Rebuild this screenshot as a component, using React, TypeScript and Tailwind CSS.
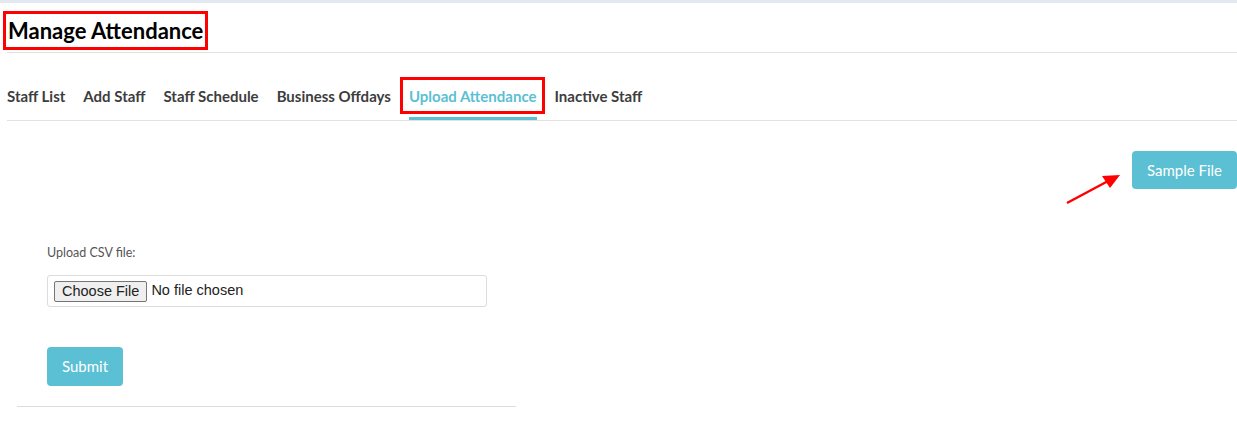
import React from "react";

// Manage Attendance — Upload Attendance tab

const TABS = [
  "Staff List",
  "Add Staff",
  "Staff Schedule",
  "Business Offdays",
  "Upload Attendance",
  "Inactive Staff",
];
const ACTIVE = "Upload Attendance";

export default function App() {
  return (
    <div className="relative min-h-[441px] w-[1237px] bg-white font-['Lato',sans-serif] text-[#333]">
      <div className="h-[3px] bg-[#e3e9f0]" />

      {/* Header */}
      <div className="ml-[7px] flex h-[50px] items-center border-b border-[#e2e2e2] pt-[5px]">
        <h1 className="-ml-[4px] border-[3px] border-[#f00] px-[2px] py-[2px] text-[22px] font-bold leading-[29px] text-black">
          Manage Attendance
        </h1>
      </div>

      {/* Tabs */}
      <div className="ml-[7px] mt-[29px] flex gap-[18px] border-b border-[#e2e2e2]">
        {TABS.map((tab) => {
          const active = tab === ACTIVE;
          return (
            <div
              key={tab}
              className={
                active
                  ? "relative border-b-[3px] border-[#5bc0d4] pb-[6px] text-[15px] font-bold leading-[29px] text-[#5bc0d4]"
                  : "pb-[9px] text-[15px] font-bold leading-[29px] text-[#3d3d3d]"
              }
            >
              {tab}
              {active && (
                <span className="absolute -left-[9px] -right-[8px] -top-[5px] bottom-[3px] border-[3px] border-[#f00]" />
              )}
            </div>
          );
        })}
      </div>

      {/* Sample file */}
      <div className="mt-[30px] flex justify-end">
        <button className="h-[38px] rounded-[4px] bg-[#5bc0d4] px-[15px] text-[15px] text-white">
          Sample File
        </button>
      </div>

      <svg className="absolute left-[1064px] top-[170px]" width="60" height="36" viewBox="0 0 60 36">
        <line x1="3" y1="33" x2="46" y2="10" stroke="#f00" strokeWidth="2.5" />
        <polygon points="56,5 38,6 46,18" fill="#f00" />
      </svg>

      {/* Form */}
      <div className="ml-[17px] mt-[57px] w-[499px] border-b border-[#dcdcdc] pb-[20px]">
        <div className="pl-[30px]">
          <label className="block text-[12.5px] leading-[14px] text-[#555]">Upload CSV file:</label>
          <div className="mt-[15px] flex h-[32px] w-[440px] items-center rounded-[3px] border border-[#dcdcdc] px-[6px] font-['Liberation_Sans',sans-serif] text-[14.5px] text-[#222]">
            <span className="rounded-[2px] border border-[#767676] bg-[#efefef] px-[7px] leading-[19px]">
              Choose File
            </span>
            <span className="ml-[4px]">No file chosen</span>
          </div>
          <button className="mt-[40px] h-[39px] rounded-[4px] bg-[#5bc0d4] px-[15px] text-[15px] text-white">
            Submit
          </button>
        </div>
      </div>
    </div>
  );
}
